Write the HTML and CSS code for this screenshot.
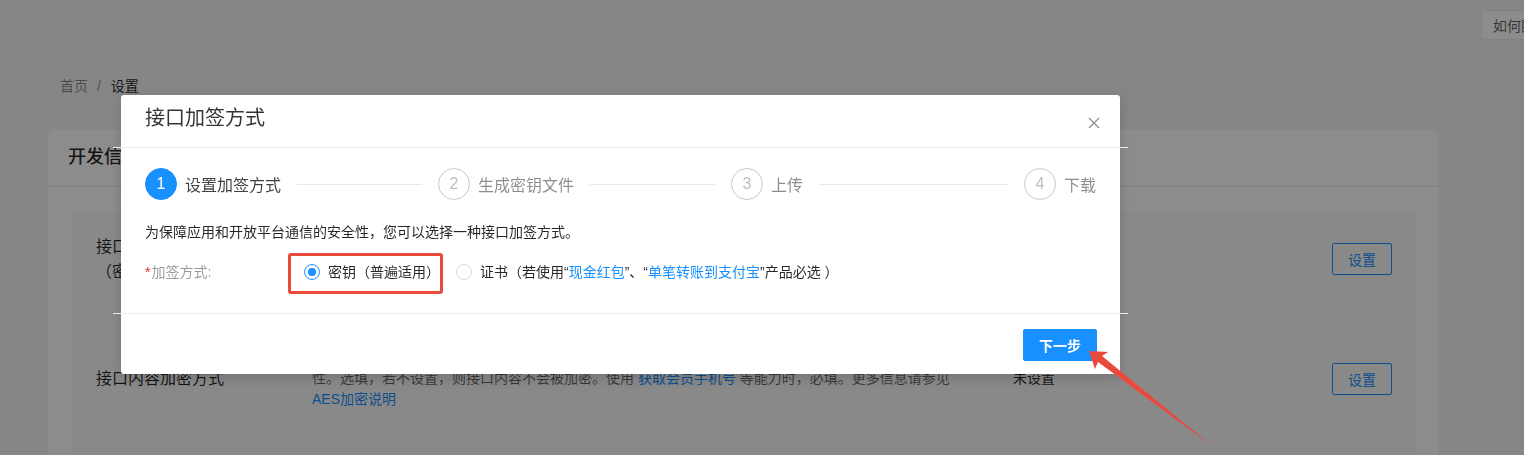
FILE: index.html
```html
<!DOCTYPE html>
<html lang="zh-CN">
<head>
    <meta charset="UTF-8">
    <meta name="viewport" content="width=device-width, initial-scale=1.0">
    <title>开发设置</title>
    <link rel="stylesheet" href="styles.css">
</head>
<body>

<div class="page">
    <div class="topbar">
        <button class="help-btn">如何配置</button>
    </div>

    <div class="breadcrumb">
        <span class="crumb">首页</span>
        <span class="crumb-sep">/</span>
        <span class="crumb current">设置</span>
    </div>

    <div class="card">
        <div class="card-head">开发信息</div>
        <div class="card-body">
            <div class="setting-list">
                <div class="setting-row">
                    <div class="setting-label">接口加签方式<br>（密钥/证书）</div>
                    <div class="setting-desc">用于保障应用和开放平台之间通信的安全性，调用接口前必须设置。<br>支持公钥和公钥证书两种方式。</div>
                    <div class="setting-status">已设置</div>
                    <button class="outline-btn">设置</button>
                </div>
                <div class="setting-row tall">
                    <div class="setting-label">接口内容加密方式</div>
                    <div class="setting-desc">设置后，开放平台将对接口请求和响应的内容进行 AES 加密，以保障敏感数据传输的安全<br>性。选填，若不设置，则接口内容不会被加密。使用 <a class="link">获取会员手机号</a> 等能力时，必填。更多信息请参见<br><a class="link">AES加密说明</a></div>
                    <div class="setting-status">未设置</div>
                    <button class="outline-btn">设置</button>
                </div>
            </div>
        </div>
    </div>
</div>

<div class="mask"></div>

<div class="modal">
    <div class="modal-head">
        <span class="modal-title">接口加签方式</span>
        <svg class="modal-close" width="12" height="12" viewBox="0 0 12 12">
            <path d="M1 1 L11 11 M11 1 L1 11" stroke="#8c8c8c" stroke-width="1.3" fill="none"/>
        </svg>
    </div>
    <div class="modal-rule"></div>

    <div class="modal-body">
        <div class="steps">
            <div class="step active">
                <span class="step-icon">1</span>
                <span class="step-title">设置加签方式</span>
                <span class="step-line"></span>
            </div>
            <div class="step">
                <span class="step-icon">2</span>
                <span class="step-title">生成密钥文件</span>
                <span class="step-line"></span>
            </div>
            <div class="step">
                <span class="step-icon">3</span>
                <span class="step-title">上传</span>
                <span class="step-line"></span>
            </div>
            <div class="step last">
                <span class="step-icon">4</span>
                <span class="step-title">下载</span>
            </div>
        </div>

        <p class="intro">为保障应用和开放平台通信的安全性，您可以选择一种接口加签方式。</p>

        <div class="form-row">
            <label class="form-label"><span class="required">*</span>加签方式:</label>
            <div class="radio-group">
                <span class="highlight">
                    <span class="radio checked"></span>
                    <span class="radio-text">密钥（普遍适用）</span>
                </span>
                <span class="option">
                    <span class="radio"></span>
                    <span class="radio-text">证书（若使用“<a class="link">现金红包</a>”、“<a class="link">单笔转账到支付宝</a>”产品必选 ）</span>
                </span>
            </div>
        </div>
    </div>

    <div class="modal-rule"></div>
    <div class="modal-foot">
        <button class="primary-btn">下一步</button>
    </div>
</div>

<!-- annotation arrow pointing at the next button -->
<svg class="arrow" width="1524" height="455" viewBox="0 0 1524 455">
    <polygon points="1089,351 1108,352 1102,356 1212,446 1098,362 1095,369" fill="#ea4a3c"/>
</svg>

</body>
</html>
```

FILE: styles.css
```css
body {
    margin: 0;
    font-family: "Liberation Sans", "Noto Sans CJK SC", sans-serif;
    font-size: 14px;
    color: rgba(0, 0, 0, 0.85);
    background-color: #f5f5f5;
    overflow: hidden;
    height: 455px;
}

button {
    font-family: inherit;
}

.link {
    color: #1890ff;
    text-decoration: none;
}

.page {
    padding: 0 85px 0 48px;
}

.topbar {
    display: flex;
    justify-content: flex-end;
    height: 50px;
    padding-top: 10px;
    box-sizing: border-box;
    margin-right: -85px;
}

.help-btn {
    width: 80px;
    height: 30px;
    margin-right: -37px;
    padding: 0 11px;
    text-align: left;
    white-space: nowrap;
    overflow: hidden;
    font-size: 14px;
    color: rgba(0, 0, 0, 0.65);
    background: #fff;
    border: 1px solid #ececec;
    border-radius: 4px;
}

.breadcrumb {
    margin-top: 25px;
    padding-left: 12px;
    line-height: 22px;
    color: rgba(0, 0, 0, 0.45);
}

.crumb-sep {
    margin: 0 6px 0 5px;
}

.crumb.current {
    color: rgba(0, 0, 0, 0.85);
}

.card {
    margin-top: 32px;
    background: #fff;
    border-radius: 8px 8px 0 0;
    height: 326px;
    overflow: hidden;
}

.card-head {
    height: 57px;
    line-height: 57px;
    padding: 0 20px;
    font-size: 18px;
    font-weight: 500;
    border-bottom: 1px solid #ebebeb;
}

.card-body {
    padding: 24px 23px 0 24px;
}

.setting-list {
    background: #fafafa;
    padding: 0 24px;
    height: 244px;
    overflow: hidden;
}

.setting-row {
    display: grid;
    grid-template-columns: 216px 701px 1fr 60px;
    align-items: center;
    padding: 23px 0;
}

.setting-row.tall {
    padding: 40px 0 24px;
}

.setting-label {
    font-size: 16px;
    line-height: 25px;
}

.setting-desc {
    line-height: 21px;
    color: rgba(0, 0, 0, 0.6);
}

.setting-status {
    line-height: 21px;
}

.outline-btn {
    width: 60px;
    height: 32px;
    padding: 0;
    font-size: 14px;
    color: #1890ff;
    background: transparent;
    border: 1px solid #1890ff;
    border-radius: 2px;
}

.mask {
    position: fixed;
    top: 0;
    left: 0;
    right: 0;
    bottom: 0;
    background: rgba(0, 0, 0, 0.45);
}

.modal {
    position: absolute;
    top: 95px;
    left: 121px;
    width: 999px;
    background: #fff;
    border-radius: 3px;
    box-shadow: 0 4px 12px rgba(0, 0, 0, 0.15);
}

.modal-head {
    display: flex;
    align-items: center;
    justify-content: space-between;
    height: 52px;
    padding: 0 20px 6px 24px;
    box-sizing: border-box;
}

.modal-title {
    font-size: 20px;
    line-height: 24px;
    color: rgba(0, 0, 0, 0.8);
}

.modal-close {
    margin-top: 10px;
}

.modal-rule {
    height: 1px;
    margin: 0 -8px;
    background: #ebebeb;
}

.modal-body {
    padding: 20px 24px 19px;
}

.steps {
    display: flex;
    height: 32px;
}

.step {
    display: flex;
    align-items: center;
    flex: 1 1 0;
    min-width: 0;
    margin-right: 16px;
    overflow: hidden;
    white-space: nowrap;
}

.step.last {
    flex: none;
    margin-right: 0;
}

.step-icon {
    flex: none;
    width: 30px;
    height: 30px;
    line-height: 30px;
    text-align: center;
    font-size: 16px;
    color: #bfbfbf;
    border: 1px solid #c8c8c8;
    border-radius: 50%;
}

.step-title {
    margin-left: 8px;
    font-size: 16px;
    color: rgba(0, 0, 0, 0.45);
}

.step-line {
    flex: 1;
    height: 1px;
    margin-left: 16px;
    background: #e8e8e8;
}

.step.active .step-icon {
    color: #fff;
    background: #1890ff;
    border-color: #1890ff;
}

.step.active .step-title {
    color: rgba(0, 0, 0, 0.75);
}

.intro {
    margin: 21px 0 0;
    line-height: 22px;
    color: rgba(0, 0, 0, 0.85);
}

.form-row {
    display: flex;
    align-items: center;
    margin-top: 10px;
    height: 41px;
}

.form-label {
    width: 143px;
    flex: none;
    line-height: 22px;
    margin-top: -3px;
    color: rgba(0, 0, 0, 0.4);
}

.required {
    color: #f5222d;
    margin-right: 1px;
}

.radio-group {
    display: flex;
    align-items: center;
}

.highlight {
    display: flex;
    align-items: center;
    height: 41px;
    box-sizing: border-box;
    padding: 0 0 3px 13px;
    border: 3px solid #ea4a3c;
    border-radius: 3px;
}

.option {
    display: flex;
    align-items: center;
    margin-left: 13px;
    margin-top: -3px;
}

.radio {
    flex: none;
    position: relative;
    width: 16px;
    height: 16px;
    box-sizing: border-box;
    border: 1px solid #d9d9d9;
    border-radius: 50%;
    background: #fff;
}

.radio.checked {
    border-color: #1890ff;
}

.radio.checked::after {
    content: "";
    position: absolute;
    top: 3px;
    left: 3px;
    width: 8px;
    height: 8px;
    border-radius: 50%;
    background: #1890ff;
}

.radio-text {
    margin-left: 8px;
    line-height: 22px;
    white-space: nowrap;
}

.modal-foot {
    display: flex;
    justify-content: flex-end;
    padding: 15px 23px 13px;
}

.primary-btn {
    width: 74px;
    height: 32px;
    padding: 0;
    font-size: 14px;
    font-weight: bold;
    color: #fff;
    background: #1890ff;
    border: 1px solid #1890ff;
    border-radius: 2px;
}

.arrow {
    position: absolute;
    top: 0;
    left: 0;
    pointer-events: none;
}
```
